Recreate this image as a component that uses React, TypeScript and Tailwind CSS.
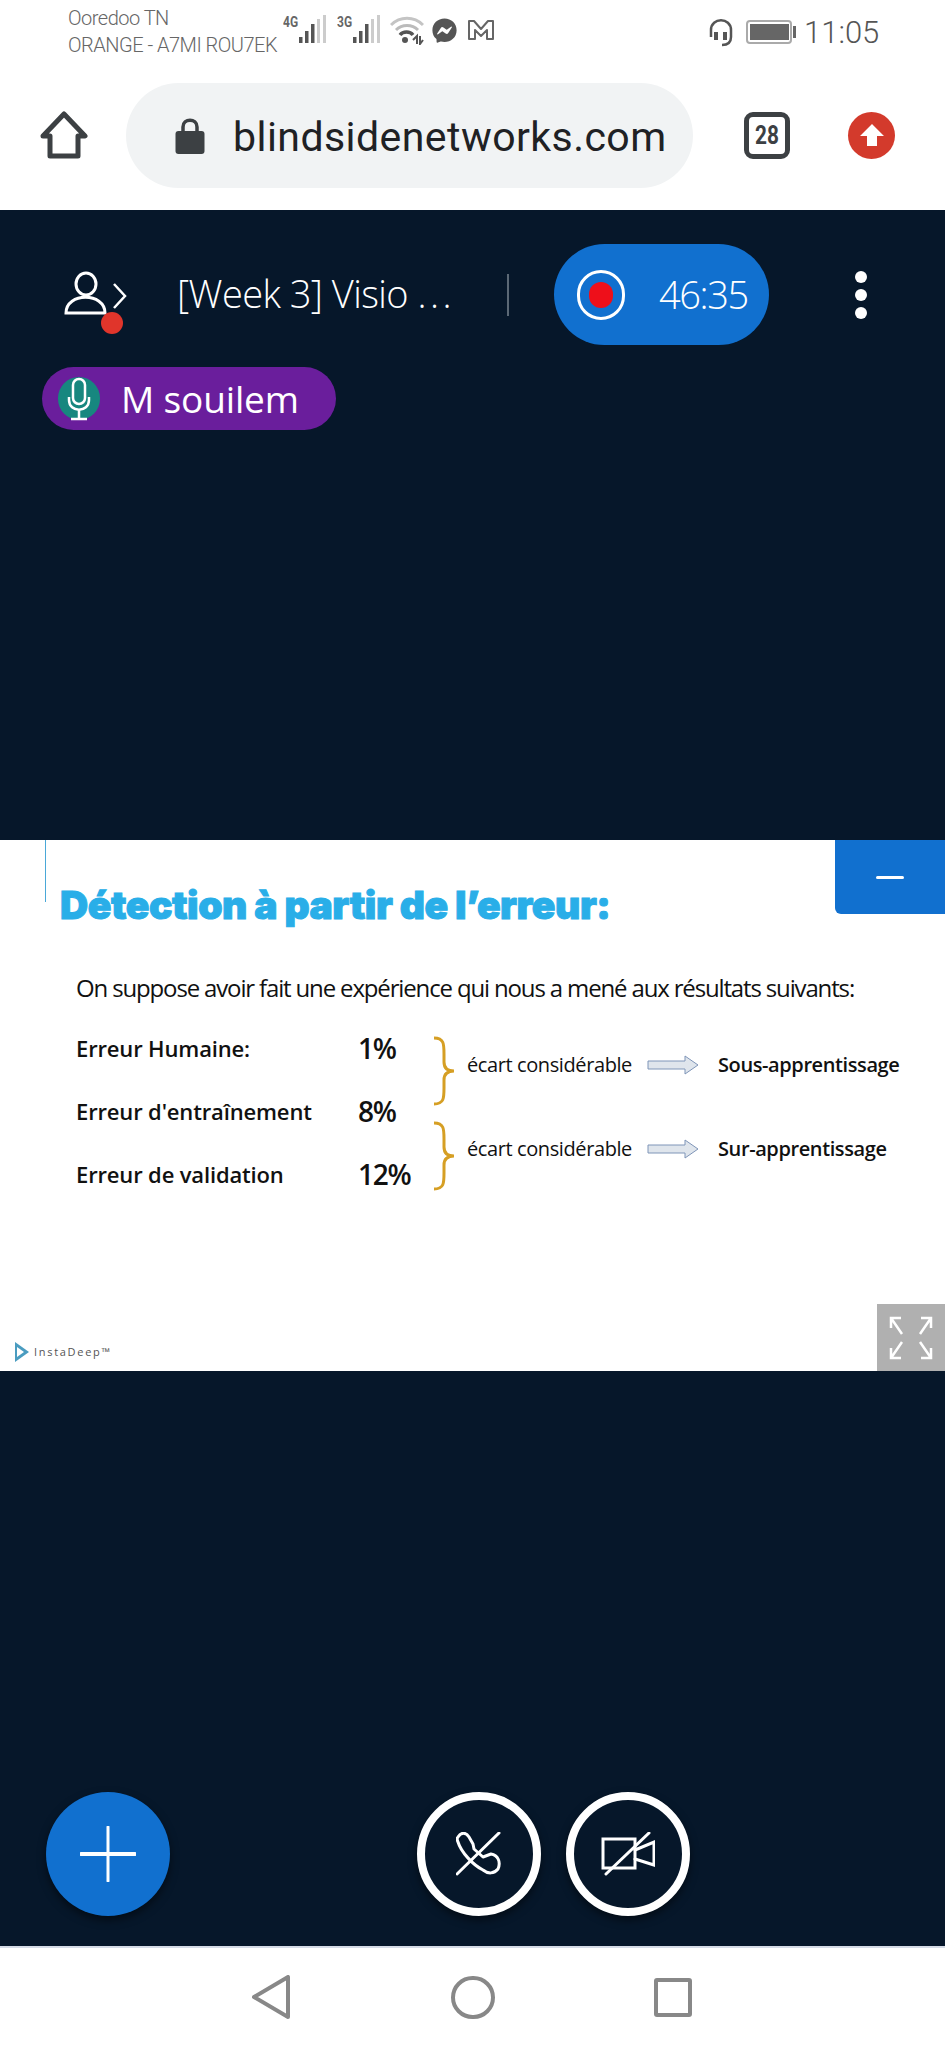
import { FaFacebookMessenger } from 'react-icons/fa'

const dark = 'bg-[#06172a]'

function SignalBars({ label }: { label: string }) {
  return (
    <div className="flex items-start">
      <span className="w-[15px] text-[15px] leading-[14px] font-bold text-[#666] font-['Roboto',sans-serif] scale-x-[0.8] origin-left">
        {label}
      </span>
      <svg width="30" height="30" viewBox="0 0 30 30" className="mt-[-1px]">
        <rect x="1" y="23" width="3.5" height="6" fill="#555" />
        <rect x="7" y="17" width="3.5" height="12" fill="#555" />
        <rect x="13" y="10" width="3.5" height="19" fill="#555" />
        <rect x="19" y="5" width="3" height="24" fill="#ccc" />
        <rect x="25" y="1" width="3" height="28" fill="#ccc" />
      </svg>
    </div>
  )
}

function StatusBar() {
  return (
    <div className="h-[60px] flex items-center pl-[68px] text-[#666] font-['Roboto',sans-serif]">
      <div className="w-[215px] mt-[4px] font-light text-[20px] leading-[27px] tracking-[-0.5px] whitespace-nowrap">
        <div>Ooredoo TN</div>
        <div>ORANGE - A7MI ROU7EK</div>
      </div>
      <div className="flex items-center gap-[9px] mt-[-2px]">
        <SignalBars label="4G" />
        <SignalBars label="3G" />
      </div>
      <svg width="34" height="30" viewBox="0 0 34 30" className="ml-[8px]" fill="none">
        <path d="M1 10 C10 1 24 1 33 10" stroke="#c4c4c4" strokeWidth="3" />
        <path d="M6 15 C12 9 22 9 28 15" stroke="#bbb" strokeWidth="3" />
        <path d="M10 20 C13 16 20 16 23 20" stroke="#555" strokeWidth="3.5" />
        <circle cx="15" cy="25" r="3" fill="#555" />
        <path d="M23 25 L27 21 V29 M30 21 V29 L33 25" stroke="#555" strokeWidth="2" />
      </svg>
      <FaFacebookMessenger size={25} className="ml-[8px] text-[#555]" />
      <svg width="26" height="20" viewBox="0 0 26 20" className="ml-[11px]" fill="none" stroke="#666" strokeWidth="2" strokeLinejoin="round">
        <path d="M1 19 V1 H6 L13 9 L20 1 H25 V19 H19 V10 L13 16 L7 10 V19 Z" />
      </svg>
      <div className="ml-[214px] mt-[4px] flex items-center">
        <svg width="26" height="30" viewBox="0 0 26 30" fill="none" stroke="#555" strokeWidth="2.5">
          <path d="M3 20 V13 C3 0 23 0 23 13 V20" />
          <path d="M8 15 V23 M17 15 V23" strokeWidth="4" />
          <path d="M23 20 C23 26 19 28 14 28" />
        </svg>
        <div className="ml-[12px] flex items-center">
          <div className="w-[46px] h-[24px] rounded-[4px] border-2 border-[#aaa] p-[2px]">
            <div className="w-[39px] h-full bg-[#666]" />
          </div>
          <div className="w-[3px] h-[12px] bg-[#666] ml-[1px]" />
        </div>
        <span className="ml-[8px] text-[31px] font-light text-[#555] leading-none">11:05</span>
      </div>
    </div>
  )
}

function Toolbar() {
  return (
    <div className="h-[150px] flex items-center pl-[40px]">
      <svg width="48" height="48" viewBox="0 0 48 48" fill="none" stroke="#3c4043" strokeWidth="5" strokeLinejoin="round">
        <path d="M24 3 L45 25 H38 V45 H10 V25 H3 Z" />
      </svg>
      <div className="ml-[38px] w-[567px] h-[105px] rounded-full bg-[#f1f3f4] flex items-center pl-[49px]">
        <svg width="30" height="37" viewBox="0 0 30 37">
          <path d="M8 16 V10 C8 1 22 1 22 10 V16" fill="none" stroke="#3c4043" strokeWidth="3.5" />
          <rect x="0.5" y="14" width="29" height="23" rx="3" fill="#3c4043" />
        </svg>
        <span className="ml-[28px] mt-[4px] text-[41px] text-[#202124] tracking-[0.45px] font-['Roboto',sans-serif] leading-none">
          blindsidenetworks.com
        </span>
      </div>
      <div className="ml-[51px] w-[46px] h-[47px] rounded-[9px] border-[5px] border-[#3c4043] flex items-center justify-center">
        <span className="text-[26px] font-bold text-[#3c4043] font-['Roboto',sans-serif] scale-x-[0.8]">28</span>
      </div>
      <div className="ml-[58px] w-[47px] h-[47px] rounded-full bg-[#d33a2c] flex items-center justify-center">
        <svg width="26" height="26" viewBox="0 0 26 26" fill="#fff">
          <path d="M13 2 L25 14 H18 V24 H8 V14 H1 Z" />
        </svg>
      </div>
    </div>
  )
}

function Header() {
  return (
    <div className="mt-[34px] h-[101px] flex items-center text-white font-['Open_Sans',sans-serif]">
      <div className="relative ml-[64px] w-[64px] h-[44px] mt-[-4px]">
        <svg width="64" height="44" viewBox="0 0 64 44" fill="none" stroke="#fff" strokeWidth="3">
          <ellipse cx="22" cy="13" rx="10" ry="11" />
          <path d="M2 42 C2 21 41 21 41 42 Z" />
          <path d="M50 13 L61 25 L50 37" strokeWidth="2.5" />
        </svg>
        <span className="absolute left-[37px] top-[41px] w-[22px] h-[22px] rounded-full bg-[#e0352b]" />
      </div>
      <div className="ml-[49px] mt-[-4px] w-[330px] text-[38px] leading-none font-light tracking-[-0.55px] whitespace-nowrap">
        [Week 3] Visio <span className="tracking-[3.5px]">...</span>
      </div>
      <div className="w-[2px] h-[42px] bg-[#5b6875]" />
      <div className="ml-[45px] w-[215px] h-[101px] rounded-full bg-[#1170cf] flex items-center pl-[23px]">
        <div className="w-[48px] h-[50px] rounded-full border-[3px] border-white flex items-center justify-center">
          <div className="w-[24px] h-[26px] rounded-full bg-[#ee0f1a]" />
        </div>
        <span className="ml-[34px] mt-[-2px] text-[38px] leading-none font-light tracking-[-1.4px]">46:35</span>
      </div>
      <div className="ml-[86px] flex flex-col gap-[6px]">
        <span className="w-[12px] h-[12px] rounded-full bg-white" />
        <span className="w-[12px] h-[12px] rounded-full bg-white" />
        <span className="w-[12px] h-[12px] rounded-full bg-white" />
      </div>
    </div>
  )
}

function Talker() {
  return (
    <div className="mt-[22px] ml-[42px] w-[294px] h-[63px] rounded-full bg-[#6a1e9c] flex items-center pl-[16px] text-white font-['Open_Sans',sans-serif]">
      <div className="w-[42px] h-[43px] rounded-full bg-[#17877f] flex items-center justify-center">
        <svg width="24" height="44" viewBox="0 0 24 44" fill="none" stroke="#fff" strokeWidth="2.5">
          <rect x="6" y="2" width="12" height="25" rx="6" />
          <path d="M2 20 V23 C2 36 22 36 22 23 V20 M12 32 V41 M4 42 H20" />
        </svg>
      </div>
      <span className="ml-[21px] text-[37px] leading-none tracking-[-0.15px]">M souilem</span>
    </div>
  )
}

function Brace({ className }: { className: string }) {
  return (
    <svg width="26" height="70" viewBox="0 0 26 70" fill="none" stroke="#d69f24" strokeWidth="3" className={className}>
      <path d="M2 2 C12 2 12 8 12 18 V26 C12 31 14 35 22 35 C14 35 12 39 12 44 V52 C12 62 12 68 2 68" />
    </svg>
  )
}

function SlideArrow() {
  return (
    <svg width="52" height="20" viewBox="0 0 52 20" stroke="#7f95b8" strokeWidth="1" fill="#dfe5ec">
      <path d="M1 6 H38 V1 L51 10 L38 19 V14 H1 Z" />
    </svg>
  )
}

function Slide() {
  return (
    <div className="relative mt-[410px] h-[531px] bg-white font-['Open_Sans',sans-serif] text-[#111]">
      <div className="absolute left-[45px] top-0 w-px h-[62px] bg-[#4aa8d8]" />
      <div className="absolute right-0 top-0 w-[110px] h-[74px] bg-[#1170cf] rounded-bl-[6px] flex items-center justify-center">
        <div className="w-[28px] h-[3px] bg-white rounded-full" />
      </div>
      <div className="pl-[60px] pt-[40px] text-[39px] leading-[50px] font-black tracking-[-0.45px] text-[#29aee8] font-['Inter',sans-serif] [-webkit-text-stroke:1px_#29aee8]">
        Détection à partir de l’erreur:
      </div>
      <div className="pl-[76px] mt-[42px] text-[24px] leading-[32px] tracking-[-1.15px] whitespace-nowrap">
        On suppose avoir fait une expérience qui nous a mené aux résultats suivants:
      </div>
      <div className="ml-[76px] mt-[25px] flex">
        <div className="w-[282px] text-[22px] font-semibold tracking-[-0.15px]">
          <div className="h-[63px] leading-[38px]">Erreur Humaine:</div>
          <div className="h-[63px] leading-[38px]">Erreur d'entraînement</div>
          <div className="leading-[38px]">Erreur de validation</div>
        </div>
        <div className="w-[74px] text-[28px] font-semibold tracking-[-1.2px]">
          <div className="h-[63px] leading-[38px]">1%</div>
          <div className="h-[63px] leading-[38px]">8%</div>
          <div className="leading-[38px]">12%</div>
        </div>
        <div className="flex flex-col gap-[14px] mt-[1px]">
          <div className="h-[70px] flex items-center">
            <Brace className="self-start mt-[6px]" />
            <span className="ml-[9px] w-[180px] text-[20px] tracking-[-0.4px] whitespace-nowrap">écart considérable</span>
            <SlideArrow />
            <span className="ml-[19px] text-[20px] font-semibold tracking-[-0.4px] whitespace-nowrap">Sous-apprentissage</span>
          </div>
          <div className="h-[70px] flex items-center">
            <Brace className="self-start mt-[7px]" />
            <span className="ml-[9px] w-[180px] text-[20px] tracking-[-0.4px] whitespace-nowrap">écart considérable</span>
            <SlideArrow />
            <span className="ml-[19px] text-[20px] font-semibold tracking-[-0.4px] whitespace-nowrap">Sur-apprentissage</span>
          </div>
        </div>
      </div>
      <div className="absolute left-[14px] bottom-[9px] flex items-center">
        <svg width="16" height="20" viewBox="0 0 16 20">
          <path d="M1 0 L15 10 L1 20 Z" fill="#4a9cc0" />
          <path d="M3 5 L10 10 L3 15 Z" fill="#fff" />
        </svg>
        <span className="ml-[4px] text-[11px] tracking-[1.7px] text-[#555]">InstaDeep™</span>
      </div>
      <div className="absolute right-0 bottom-0 w-[68px] h-[67px] bg-[#b0b0b0] flex items-center justify-center">
        <svg width="44" height="44" viewBox="0 0 44 44" fill="none" stroke="#fff" strokeWidth="2.5">
          <path d="M2 12 V2 H12 M2 2 L13 18" />
          <path d="M32 2 H42 V12 M42 2 L31 18" />
          <path d="M2 32 V42 H12 M2 42 L13 26" />
          <path d="M42 32 V42 H32 M42 42 L31 26" />
        </svg>
      </div>
    </div>
  )
}

function Controls() {
  return (
    <div className="mt-[421px] flex">
      <div className="ml-[46px] w-[124px] h-[124px] rounded-full bg-[#1170cf] shadow-[0_4px_8px_rgba(0,0,0,0.5)] flex items-center justify-center">
        <svg width="56" height="56" viewBox="0 0 56 56" stroke="#fff" strokeLinecap="round">
          <path d="M28 1 V55" strokeWidth="3" />
          <path d="M1 28 H55" strokeWidth="4" />
        </svg>
      </div>
      <div className="ml-[247px] w-[124px] h-[124px] rounded-full border-[8px] border-white shadow-[0_4px_8px_rgba(0,0,0,0.5)] flex items-center justify-center">
        <svg width="46" height="44" viewBox="0 0 46 44" fill="none" stroke="#fff" strokeWidth="3" strokeLinecap="round" strokeLinejoin="round">
          <path d="M2 5 C5 0 10 0 13 5 L17 12 L18 17 L27 25 L35 22 C42 23 45 30 42 37 C38 42 32 42 27 38 C17 33 5 20 2 10 C1 8 1 6 2 5 Z" />
          <path d="M43 1 L1 42" />
        </svg>
      </div>
      <div className="ml-[25px] w-[124px] h-[124px] rounded-full border-[8px] border-white shadow-[0_4px_8px_rgba(0,0,0,0.5)] flex items-center justify-center">
        <svg width="54" height="44" viewBox="0 0 54 44" fill="none" stroke="#fff" strokeWidth="3" strokeLinecap="round">
          <rect x="2" y="7" width="32" height="29" />
          <path d="M34 18 L53 10 V33 L34 27" />
          <path d="M48 1 L5 42" />
        </svg>
      </div>
    </div>
  )
}

function NavBar() {
  return (
    <div className="h-[102px] bg-white border-t-2 border-[#d5dbe6] flex items-center pl-[252px] pb-[2px]">
      <svg width="38" height="44" viewBox="0 0 38 44" fill="none" stroke="#888" strokeWidth="4" strokeLinejoin="round">
        <path d="M36 2 V42 L2 22 Z" />
      </svg>
      <div className="ml-[161px] w-[44px] h-[43px] rounded-full border-[4px] border-[#888]" />
      <div className="ml-[159px] w-[38px] h-[39px] rounded-[3px] border-[4px] border-[#888]" />
    </div>
  )
}

export default function App() {
  return (
    <div className="w-[945px] h-[2048px] flex flex-col overflow-hidden bg-white">
      <StatusBar />
      <Toolbar />
      <div className={`${dark} h-[1736px]`}>
        <Header />
        <Talker />
        <Slide />
        <Controls />
      </div>
      <NavBar />
    </div>
  )
}
